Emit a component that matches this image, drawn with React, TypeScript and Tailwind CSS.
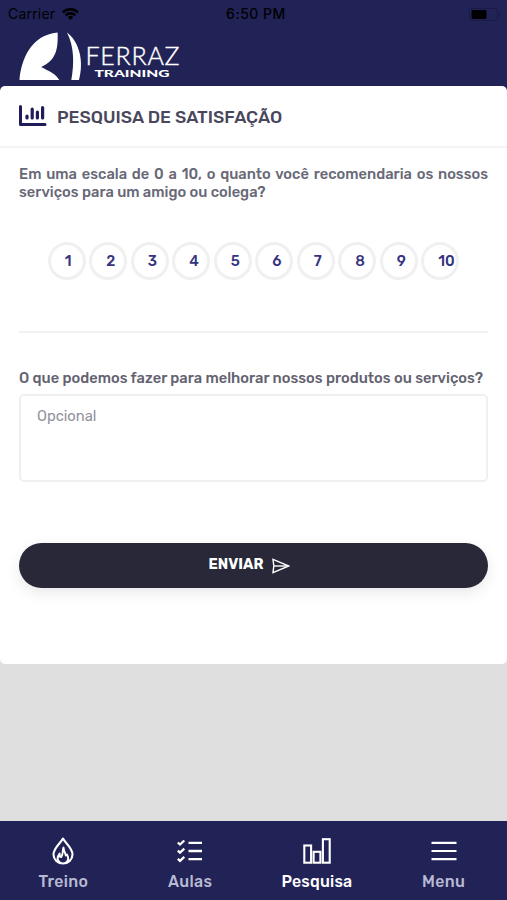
import { ReactNode } from 'react';

const scores = [1, 2, 3, 4, 5, 6, 7, 8, 9, 10];

function StatusBar() {
  return (
    <div className="grid h-7 grid-cols-3 items-center px-2 font-['Inter','Liberation_Sans',sans-serif] text-black">
      <div className="flex items-center gap-[7px] text-[14px] leading-none">
        <span className="tracking-[0.2px]">Carrier</span>
        <svg width="17" height="12" viewBox="0 0 17 12" fill="none" stroke="currentColor" strokeWidth="2.4">
          <path d="M1 4.3a10.8 10.8 0 0 1 15 0" />
          <path d="M3.6 7.4a6.8 6.8 0 0 1 9.8 0" />
          <path d="M8.5 11.9 5.8 9.2a3.8 3.8 0 0 1 5.4 0Z" fill="currentColor" stroke="none" />
        </svg>
      </div>
      <span className="pl-[5px] text-center text-[14px] leading-none font-medium tracking-[0.5px]">6:50 PM</span>
      <svg className="-mr-[2px] justify-self-end" width="32" height="13" viewBox="0 0 32 13">
        <rect x="0.5" y="0.5" width="28" height="12" rx="3" fill="none" stroke="#1a1a49" />
        <rect x="2.5" y="2" width="15" height="9" rx="1.5" fill="#000" />
        <path d="M30 4.5c1.6.7 1.6 3.3 0 4Z" fill="#1a1a49" />
      </svg>
    </div>
  );
}

function Logo() {
  return (
    <svg className="ml-[19px] mt-1" width="162" height="50" viewBox="0 0 162 50" fill="#fff">
      <path d="M0.5 48C2 28 12 3 38.6 0.6C39.4 19 36 29 22.2 35C30 39 37 42 40.3 48Z" />
      <path d="M48 0.5C59.5 9 65.5 28 60 48H52.3C55.5 31 55 14 48 0.5Z" />
      <text x="66.5" y="33" fontFamily="Lato, sans-serif" fontSize="25" fontWeight="300" stroke="#fff" strokeWidth="0.4" textLength="94" lengthAdjust="spacing">FERRAZ</text>
      <text x="75.5" y="44.5" fontFamily="Lato, sans-serif" fontSize="8.8" fontWeight="900" textLength="75" lengthAdjust="spacingAndGlyphs">TRAINING</text>
    </svg>
  );
}

function ChartIcon() {
  return (
    <svg width="28" height="22" viewBox="0 0 28 22" fill="none" stroke="#201c5b" strokeWidth="3" strokeLinecap="round">
      <path d="M1.5 1.5v18h24.5" strokeLinejoin="round" />
      <path d="M8 11v2M13.2 4v9M18.4 7v6M23.6 2.5v10.5" strokeWidth="3.2" />
    </svg>
  );
}

function SendIcon() {
  return (
    <svg width="18" height="16" viewBox="0 0 18 16" fill="none" stroke="#fff" strokeWidth="1.4">
      <path d="M1 1.3 16.8 8 1 14.7 1.8 8Z" />
      <path d="M2 8h14" />
    </svg>
  );
}

function FlameIcon() {
  return (
    <svg width="24" height="28" viewBox="0 0 24 28" fill="none" stroke="#fff" strokeWidth="2.1" strokeLinejoin="round">
      <path d="M12 1.5C9 7 2.5 11 2.5 17.5A9.5 9 0 0 0 21.5 17.5C21.5 11 15 7 12 1.5Z" />
      <path d="M9.5 26C4.5 22.5 7 19 8.7 16.5V19.5L10.3 20C12.5 17 11.2 13.5 12.5 10.5C13 15 14.5 15.5 14.7 18.5L16 17.5C18.2 21.5 17.5 24 14.5 26" strokeWidth="1.9" />
    </svg>
  );
}

function ChecklistIcon() {
  return (
    <svg width="26" height="24" viewBox="0 0 26 24" fill="none" stroke="#fff" strokeWidth="2.3">
      <path d="M.8 3.5 3 5.5 7.3 1.5M.8 11.7l2.2 2 4.3-4M.8 19.9l2.2 2 4.3-4" />
      <path d="M11.5 3.8H25M11.5 12H25M11.5 20.2H25" />
    </svg>
  );
}

function BarsIcon() {
  return (
    <svg width="28" height="26" viewBox="0 0 28 26" fill="none" stroke="#fff" strokeWidth="2.1">
      <rect x="1.3" y="7.5" width="6.8" height="17.2" />
      <rect x="10.6" y="13.8" width="6.8" height="10.9" />
      <rect x="19.9" y="1.2" width="6.8" height="23.5" />
    </svg>
  );
}

function MenuIcon() {
  return (
    <svg width="26" height="20" viewBox="0 0 26 20" stroke="#fff" strokeWidth="2.2">
      <path d="M.5 1.8h25M.5 10h25M.5 18.2h25" />
    </svg>
  );
}

function NavItem({ icon, label, active = false }: { icon: ReactNode; label: string; active?: boolean }) {
  return (
    <button className="flex flex-col items-center pt-4">
      <span className="flex h-7 items-center">{icon}</span>
      <span
        className={`mt-2 text-[15.9px] leading-[18px] font-medium ${
          active ? 'tracking-[0.2px] text-white' : 'tracking-[0.3px] text-[#b8b9d2]'
        }`}
      >
        {label}
      </span>
    </button>
  );
}

export default function App() {
  return (
    <div className="flex h-[900px] w-full flex-col overflow-hidden bg-[#dfdfdf] font-['Rubik','Roboto',sans-serif]">
      <header className="h-[86px] shrink-0 bg-[#212256]">
        <StatusBar />
        <Logo />
      </header>

      <main className="flex-1 bg-[linear-gradient(#212256_8px,#dfdfdf_8px)]">
        <section className="h-[578px] rounded-[5px] bg-white">
          <div className="flex h-[62px] items-center gap-[10px] border-b-2 border-[#f4f4f5] pl-[19px]">
            <ChartIcon />
            <h1 className="pt-[2px] text-[17.6px] font-medium text-[#49475c]">PESQUISA DE SATISFAÇÃO</h1>
          </div>

          <div className="px-[19px] pt-[18px]">
            <p className="text-justify text-[14.7px] leading-[17.5px] font-medium text-[#686877]">
              Em uma escala de 0 a 10, o quanto você recomendaria os nossos serviços para um amigo ou colega?
            </p>

            <div className="mt-[41px] flex justify-center gap-[3.5px]">
              {scores.map((score) => (
                <button
                  key={score}
                  className="flex h-[38px] w-[38px] shrink-0 items-center rounded-full border-[3px] border-[#f0f0f1] pt-px pl-[14px] text-[14.7px] font-medium text-[#36347f]"
                >
                  {score}
                </button>
              ))}
            </div>

            <hr className="mt-[51px] border-t-2 border-[#f1f1f2]" />

            <label className="mt-[36px] block text-[14.7px] leading-[18px] font-medium whitespace-nowrap text-[#636270]">
              O que podemos fazer para melhorar nossos produtos ou serviços?
            </label>
            <textarea
              placeholder="Opcional"
              className="mt-[7px] block h-[88px] w-full resize-none rounded-[5px] border-2 border-[#f0f0f1] px-4 py-[11px] text-[14.7px] leading-[18px] placeholder:text-[#92929d]"
            />

            <button className="mt-[61px] flex h-[45px] w-full items-center justify-center gap-[9px] rounded-full bg-[#282839] pr-[8px] text-[14.5px] font-bold text-white shadow-[0_5px_14px_rgba(40,40,57,0.1)]">
              <span className="-mt-[2px]">ENVIAR</span>
              <SendIcon />
            </button>
          </div>
        </section>
      </main>

      <nav className="grid h-[79px] shrink-0 grid-cols-4 bg-[#212256]">
        <NavItem icon={<FlameIcon />} label="Treino" />
        <NavItem icon={<ChecklistIcon />} label="Aulas" />
        <NavItem icon={<BarsIcon />} label="Pesquisa" active />
        <NavItem icon={<MenuIcon />} label="Menu" />
      </nav>
    </div>
  );
}
